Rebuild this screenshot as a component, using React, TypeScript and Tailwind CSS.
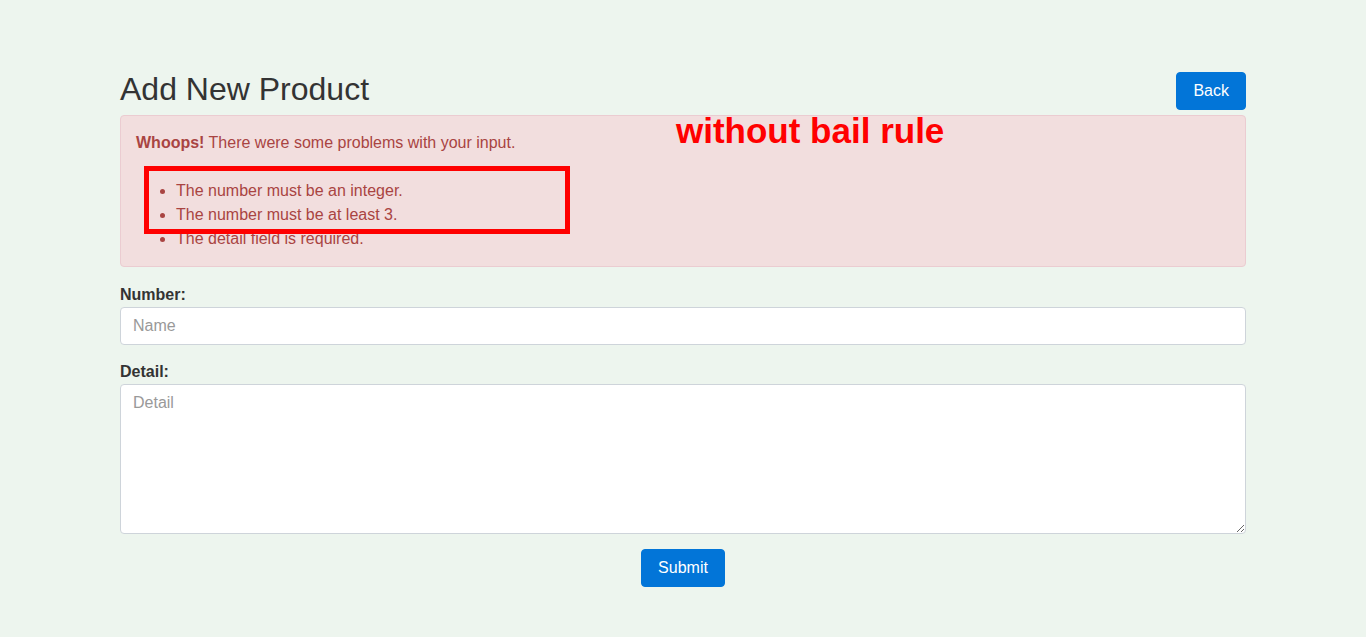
export default function App() {
  return (
    <div className="min-h-[637px] bg-[#edf5ee] font-['Liberation_Sans',Arial,sans-serif] text-[#333]">
      <div className="w-[1126px] mx-auto pt-[69px]">
        <div className="flex justify-between items-start">
          <h2 className="text-[32px] leading-[38.4px] font-normal mt-px mb-[7px] text-[#333]">Add New Product</h2>
          <a className="mt-[3px] bg-[#0275d8] border border-[#0275d8] text-white text-base leading-6 px-4 py-1.5 rounded cursor-pointer">
            Back
          </a>
        </div>
        <div className="relative border border-[#ebccd1] bg-[#f2dede] text-[#a94442] rounded p-[15px] text-base leading-6">
          <div>
            <strong>Whoops!</strong> There were some problems with your input.
          </div>
          <div className="h-6" />
          <ul className="list-disc pl-10">
            <li>The number must be an integer.</li>
            <li>The number must be at least 3.</li>
            <li>The detail field is required.</li>
          </ul>
          <div className="absolute left-[23px] top-[50px] w-[426px] h-[68px] border-[5px] border-[#ff0000]" />
          <div className="absolute left-[555px] top-[-5px] text-[35px] leading-[40px] font-bold text-[#ff0000] whitespace-nowrap">
            without bail rule
          </div>
        </div>
        <div className="mt-4">
          <strong className="block text-base leading-6 text-[#333]">Number:</strong>
          <input
            className="block w-full h-[38px] bg-white border border-[#ced4da] rounded px-3 text-base placeholder:text-[#999] outline-none"
            placeholder="Name"
          />
        </div>
        <div className="mt-[15px]">
          <strong className="block text-base leading-6 text-[#333]">Detail:</strong>
          <textarea
            className="block w-full h-[150px] bg-white border border-[#ced4da] rounded px-3 py-1.5 text-base leading-6 placeholder:text-[#999] outline-none"
            placeholder="Detail"
          />
        </div>
        <div className="mt-[15px] flex justify-center">
          <button className="bg-[#0275d8] border border-[#0275d8] text-white text-base leading-6 px-4 py-1.5 rounded">
            Submit
          </button>
        </div>
      </div>
    </div>
  );
}
